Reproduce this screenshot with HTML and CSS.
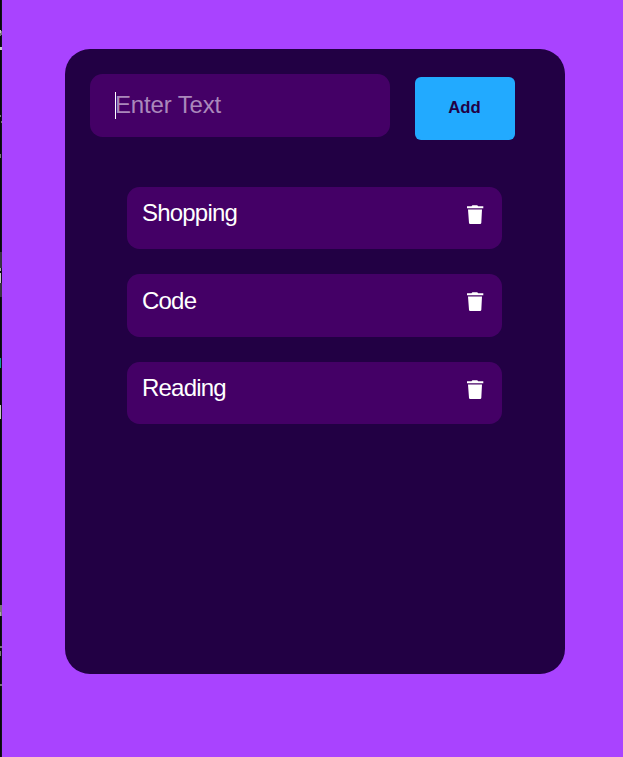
FILE: index.html
```html
<!DOCTYPE html>
<html lang="en">
<head>
<meta charset="utf-8">
<title>Todo List</title>
<link rel="stylesheet" href="styles.css">
</head>
<body>
<svg width="0" height="0" class="defs" aria-hidden="true">
  <symbol id="trash" viewBox="0 0 18 20">
    <path d="M1 1.2H5.5L6.4.2H11.2L12.2 1.2H17.3V3.3H1ZM2 4.6H16L15.3 17.9Q15.2 19 14.1 19H4.2Q3.1 19 3 17.9Z"/>
  </symbol>
</svg>
<div class="page">
  <svg class="edge" width="2" height="757" viewBox="0 0 2 757" shape-rendering="crispEdges" aria-hidden="true">
    <rect width="2" height="757" fill="#08080d"/>
    <rect x="1" width="1" height="757" fill="#10141a"/>
    <path fill="#c8c8c8" d="M0 30h1v3H0zM0 47h2v3H0zM0 273h1v10H0zM0 405h1v14H0z"/>
    <path fill="#777" d="M0 33h1v3H0zM1 31h1v4H1zM0 115h1v2H0zM1 121h1v2H1zM0 154h1v4H0zM0 605h1v7H0zM1 605h1v11H1zM0 646h2v2H0zM0 651h1v5H0zM0 684h2v2H0z"/>
    <path fill="#38343f" d="M0 252h2v16H0zM0 283h2v14H0z"/>
    <path fill="#aaa" d="M0 268h1v3H0zM0 612h1v4H0z"/>
    <path fill="#119b9b" d="M0 358h1v10H0z"/>
  </svg>
  <main class="card">
    <form class="entry">
      <input class="field" type="text" placeholder="Enter Text" aria-label="Enter Text">
      <span class="caret"></span>
      <button class="add" type="button">Add</button>
    </form>
    <ul class="list">
      <li class="item"><span>Shopping</span><svg class="icon"><use href="#trash"/></svg></li>
      <li class="item"><span>Code</span><svg class="icon"><use href="#trash"/></svg></li>
      <li class="item"><span>Reading</span><svg class="icon"><use href="#trash"/></svg></li>
    </ul>
  </main>
</div>
</body>
</html>
```
FILE: styles.css
```css
* { box-sizing: border-box; }
body {
  margin: 0;
  background: #a943ff;
  font-family: "Liberation Sans", Arial, sans-serif;
  overflow: hidden;
}
.defs { position: absolute; }
.page { display: flex; height: 757px; }
.edge { flex: none; }
.card {
  width: 500px;
  height: 625px;
  margin: 49px 0 0 63px;
  padding: 25px;
  border-radius: 25px;
  background: #220044;
}
.entry { position: relative; display: flex; gap: 25px; }
.field {
  width: 300px;
  height: 63px;
  padding: 0 25px 2px;
  border: 0;
  border-radius: 12.5px;
  outline: 0;
  background: #440066;
  color: #fff;
  font: 24px "Liberation Sans", Arial, sans-serif;
  letter-spacing: -0.15px;
}
.field::placeholder { color: #aa88bb; opacity: 1; }
.caret {
  position: absolute;
  left: 25px;
  top: 18px;
  width: 1px;
  height: 27px;
  background: #fff;
}
.add {
  width: 100px;
  height: 63px;
  margin-top: 3px;
  padding: 0 1px 2px 0;
  border: 0;
  border-radius: 6px;
  background: #22aaff;
  color: #220044;
  font: bold 16.67px "Liberation Sans", Arial, sans-serif;
}
.list {
  display: flex;
  flex-direction: column;
  gap: 25px;
  width: 375px;
  margin: 46.7px 0 0 37px;
  padding: 0;
  list-style: none;
}
.item {
  display: flex;
  justify-content: space-between;
  height: 62.5px;
  padding: 12.6px 18px 0 15px;
  border-radius: 12.5px;
  background: #440066;
  color: #fff;
  font-size: 24px;
  line-height: 28px;
  letter-spacing: -0.8px;
}
.icon { width: 18px; height: 20px; margin-top: 5.4px; fill: #fff; }
```
